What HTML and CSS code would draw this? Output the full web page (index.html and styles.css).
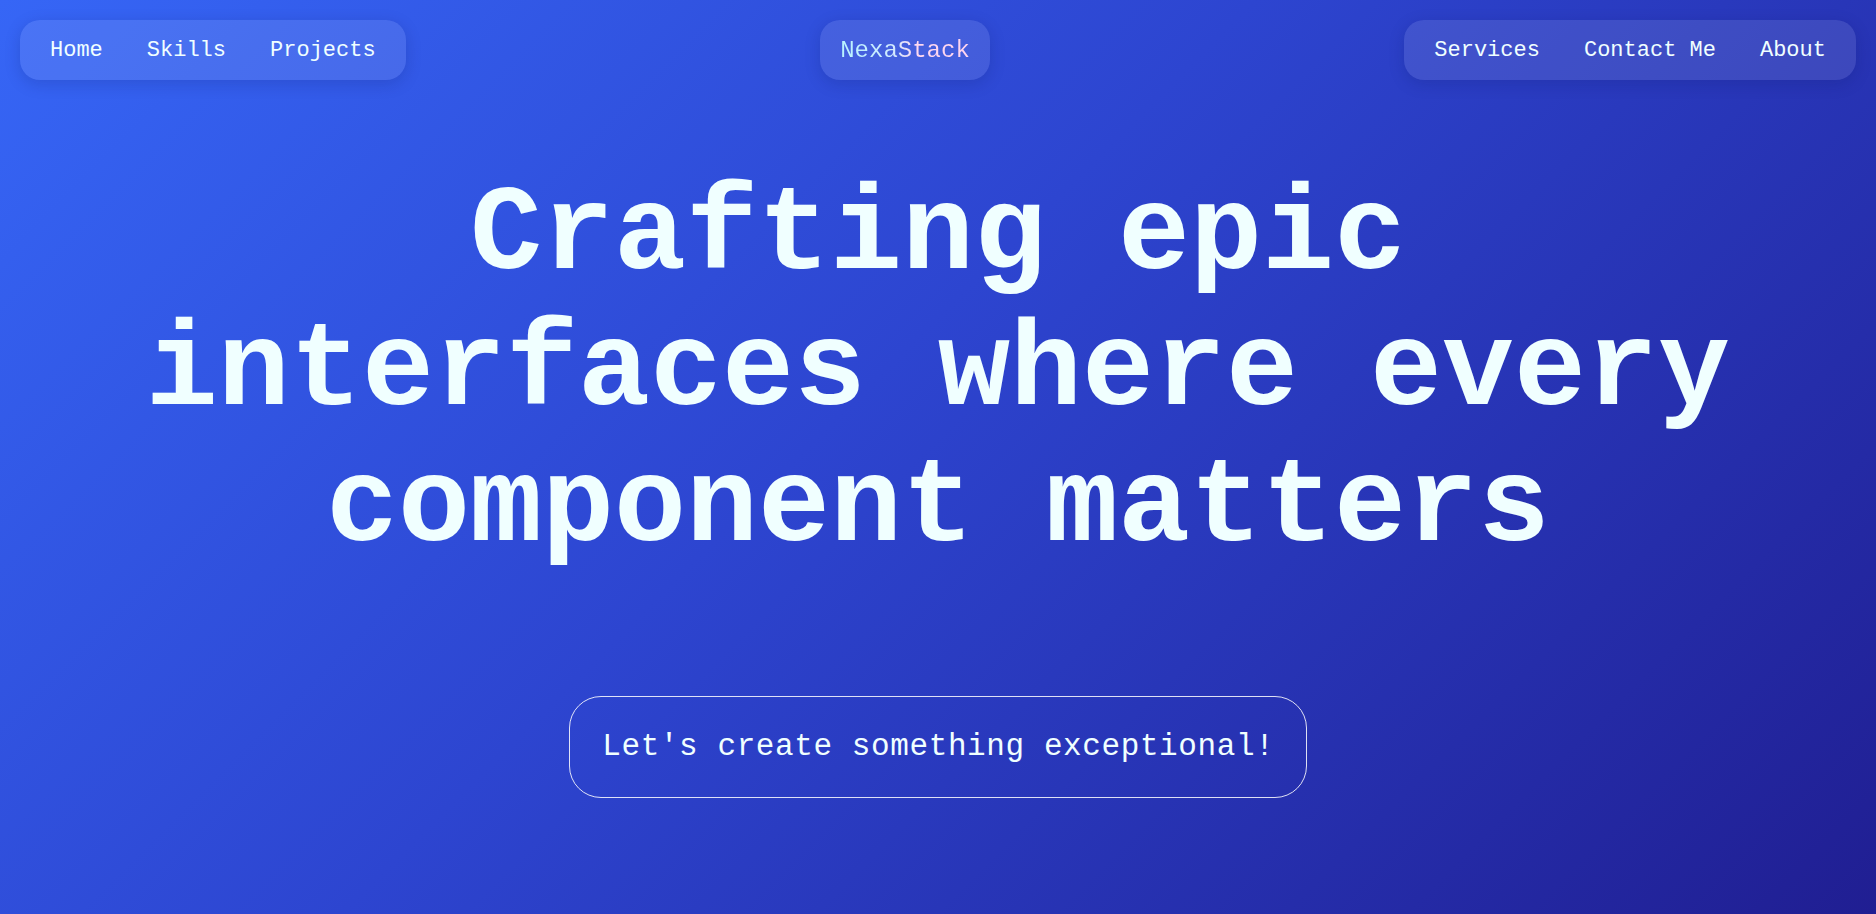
FILE: index.html
```html
<!DOCTYPE html>
<html lang="en">
<head>
<meta charset="utf-8">
<title>NexaStack</title>
<link rel="stylesheet" href="styles.css">
</head>
<body>
<div class="page">
  <header class="topbar">
    <nav class="pill nav">
      <a class="nav-link" href="#">Home</a>
      <a class="nav-link" href="#">Skills</a>
      <a class="nav-link" href="#">Projects</a>
    </nav>
    <div class="pill logo"><span class="logo-text">NexaStack</span></div>
    <nav class="pill nav">
      <a class="nav-link" href="#">Services</a>
      <a class="nav-link" href="#">Contact Me</a>
      <a class="nav-link" href="#">About</a>
    </nav>
  </header>
  <main class="hero">
    <h1 class="hero-title">Crafting epic interfaces where every component matters</h1>
    <a class="cta" href="#">Let's create something exceptional!</a>
  </main>
</div>
</body>
</html>
```
FILE: styles.css
```css
html, body {
  margin: 0;
  padding: 0;
}
body {
  font-family: "Liberation Mono", "DejaVu Sans Mono", monospace;
  color: #f0ffff;
  background: linear-gradient(135deg, #3666f6 0%, #2d45d0 45%, #201e92 100%);
  min-height: 100vh;
}
.page {
  min-height: 100vh;
  display: flex;
  flex-direction: column;
}
.topbar {
  display: flex;
  justify-content: space-between;
  align-items: center;
  padding: 20px 20px 0;
}
.pill {
  height: 60px;
  box-sizing: border-box;
  display: flex;
  align-items: center;
  border-radius: 20px;
  background: rgba(255, 255, 255, 0.1);
  box-shadow: 0 4px 16px rgba(10, 20, 90, 0.18);
}
.nav {
  padding: 0 30px;
  gap: 44px;
}
.nav-link {
  font-size: 22px;
  color: #f0ffff;
  text-decoration: none;
}
.logo {
  padding: 0 20px;
}
.logo-text {
  font-size: 24px;
  background: linear-gradient(90deg, #b8f4ff 0%, #cfeaff 40%, #ffd8f0 60%, #ffd4ef 100%);
  -webkit-background-clip: text;
  background-clip: text;
  color: transparent;
}
.hero {
  display: flex;
  flex-direction: column;
  align-items: center;
  padding-top: 88px;
}
.hero-title {
  margin: 0;
  max-width: 1640px;
  font-size: 120px;
  font-weight: 700;
  line-height: normal;
  text-align: center;
  color: #f0ffff;
}
.cta {
  margin-top: 120px;
  padding: 32px 32px 33px 32.6px;
  font-size: 31px;
  letter-spacing: 0.6px;
  color: #f0ffff;
  text-decoration: none;
  border: 1px solid rgba(255, 255, 255, 0.85);
  border-radius: 32px;
}
```
